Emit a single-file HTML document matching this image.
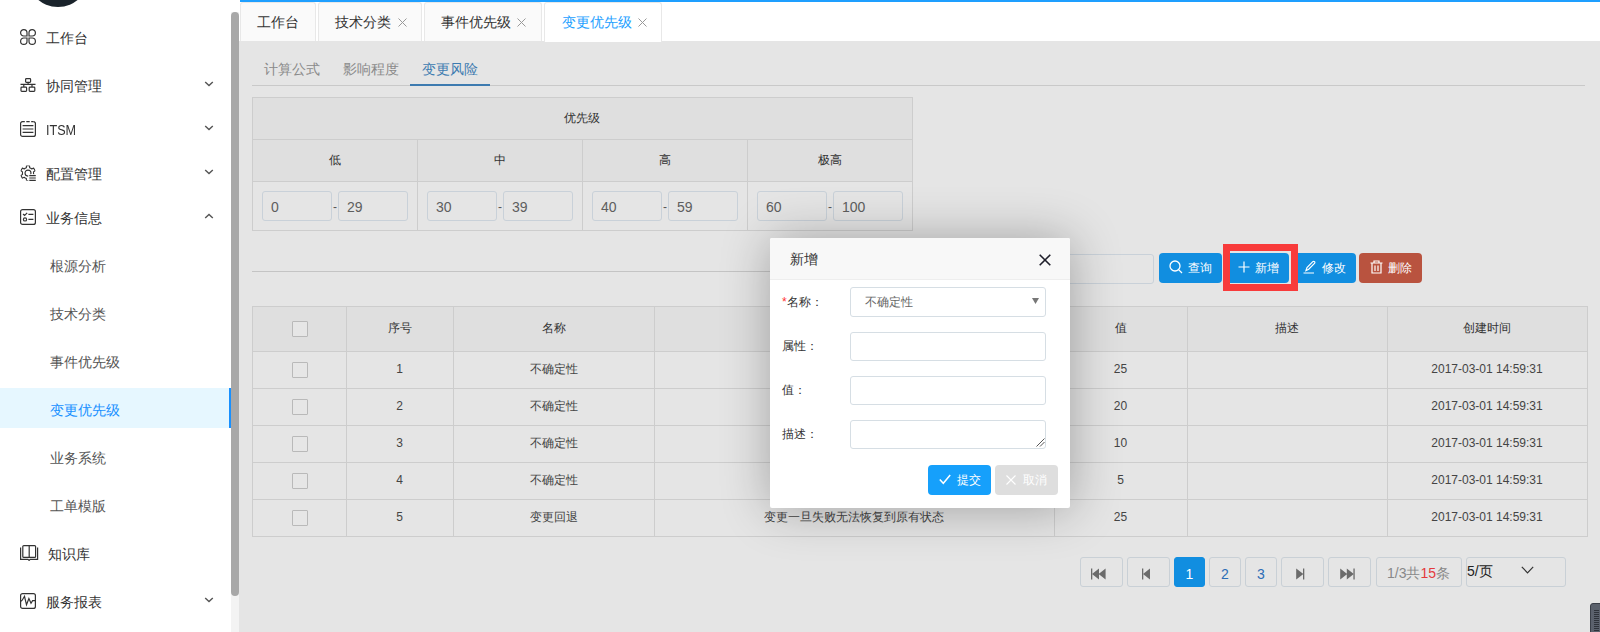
<!DOCTYPE html>
<html><head><meta charset="utf-8">
<style>
*{box-sizing:border-box;margin:0;padding:0}
html,body{width:1600px;height:632px;overflow:hidden;background:#fff;font-family:"Liberation Sans",sans-serif;color:#333}
.a{position:absolute}
.t{position:absolute;white-space:nowrap;line-height:1}
#side{left:0;top:0;width:231px;height:632px;background:#fff}
.mi{position:absolute;left:46px;font-size:14px;color:#333;white-space:nowrap;line-height:14px}
.si{position:absolute;left:50px;font-size:14px;color:#555;white-space:nowrap;line-height:14px}
.ic{position:absolute;left:20px;width:16px;height:16px}
.chev{position:absolute;left:204px;width:10px;height:6px}
#main{left:239px;top:0;width:1361px;height:632px;background:#e5e5e5}
.tab{position:absolute;top:2px;height:39px;background:#fafafa;border:1px solid #e8e8e8;border-bottom:none;border-radius:3px 3px 0 0;font-size:14px;color:#333}
.tab span{position:absolute;top:12px;line-height:14px;white-space:nowrap}
.tab i{position:absolute;top:14px;width:9px;height:9px;font-style:normal}
.cell{position:absolute;border-color:#cdcdcd;border-style:solid;border-width:0}
.inp{position:absolute;height:30px;width:70px;border:1px solid #c9d1d9;border-radius:3px;font-size:14px;color:#5e5e5e;line-height:28px;padding-left:8px;background:#e5e5e5}
.btn{position:absolute;height:30px;width:63px;border-radius:4px;color:#fff;font-size:12px}
.cb{position:absolute;width:16px;height:16px;border:1px solid #b9b9b9;border-radius:1px;background:#e6e6e6}
.pg{position:absolute;top:557px;height:30px;border:1px solid #c9d0d6;border-radius:3px}
</style></head><body>

<!-- SIDEBAR -->
<div id="side" class="a">
  <div class="a" style="left:27px;top:-55px;width:62px;height:62px;border-radius:50%;background:#1a232b"></div>
  <svg class="ic" style="top:29px" viewBox="0 0 16 16" fill="none" stroke="#333" stroke-width="1.2"><path d="M7,7H3.8A3.2,3.2 0 1 1 7,3.8Z M9,7H12.2A3.2,3.2 0 1 0 9,3.8Z M7,9H3.8A3.2,3.2 0 1 0 7,12.2Z M9,9H12.2A3.2,3.2 0 1 1 9,12.2Z"/></svg>
  <div class="mi" style="top:31px">工作台</div>
  <svg class="ic" style="top:77px" viewBox="0 0 16 16" fill="none" stroke="#333" stroke-width="1.2"><rect x="5.6" y="1.6" width="5" height="3.8" rx="0.8"/><path d="M8.1,5.4V7.3M0.5,7.3H15.5M3.8,7.3V10.1M12,7.3V10.1"/><rect x="1" y="10.1" width="5.6" height="4.3" rx="0.8"/><rect x="9.2" y="10.1" width="5.6" height="4.3" rx="0.8"/></svg>
  <div class="mi" style="top:79px">协同管理</div>
  <svg class="chev" style="top:81px" viewBox="0 0 10 6" fill="none" stroke="#555" stroke-width="1.4"><path d="M1.2,1L5,4.6L8.8,1"/></svg>
  <svg class="ic" style="top:121px" viewBox="0 0 16 16" fill="none" stroke="#333" stroke-width="1.2"><path d="M0.6,3V13.4A2,2 0 0 0 2.6,15.4H13.4A2,2 0 0 0 15.4,13.4V3A2,2 0 0 0 13.4,0.6"/><path d="M2.6,0.6H4.8M6.3,0.6H9.7M11.2,0.6H13.4M0.6,3A2,2 0 0 1 2.6,0.6" /><path d="M2.6,4.6H13.4M2.6,8H13.4M2.6,11.4H13.4"/></svg>
  <div class="mi" style="top:123px;transform:scaleX(.9);transform-origin:0 0">ITSM</div>
  <svg class="chev" style="top:125px" viewBox="0 0 10 6" fill="none" stroke="#555" stroke-width="1.4"><path d="M1.2,1L5,4.6L8.8,1"/></svg>
  <svg class="ic" style="top:165px" viewBox="0 0 16 16" fill="none" stroke="#333" stroke-width="1.1" stroke-linejoin="round"><defs><mask id="gm"><rect width="16" height="16" fill="#fff"/><rect x="8.6" y="9.6" width="8" height="8" fill="#000"/></mask></defs><g mask="url(#gm)"><path d="M5.20,3.25 L6.36,2.74 L6.44,0.76 L9.56,0.76 L9.64,2.74 L10.80,3.25 L11.82,4.00 L13.57,3.08 L15.13,5.78 L13.46,6.84 L13.60,8.10 L13.46,9.36 L15.13,10.42 L13.57,13.12 L11.82,12.20 L10.80,12.95 L9.64,13.46 L9.56,15.44 L6.44,15.44 L6.36,13.46 L5.20,12.95 L4.18,12.20 L2.43,13.12 L0.87,10.42 L2.54,9.36 L2.40,8.10 L2.54,6.84 L0.87,5.78 L2.43,3.08 L4.18,4.00Z"/><circle cx="8" cy="8.1" r="3"/></g><path d="M9.3,10.7H15.8M9.3,13H15.8M9.3,15.3H15.8" stroke-width="1.2"/></svg>
  <div class="mi" style="top:167px">配置管理</div>
  <svg class="chev" style="top:169px" viewBox="0 0 10 6" fill="none" stroke="#555" stroke-width="1.4"><path d="M1.2,1L5,4.6L8.8,1"/></svg>
  <svg class="ic" style="top:209px" viewBox="0 0 16 16" fill="none" stroke="#333" stroke-width="1.2"><rect x="0.6" y="0.6" width="14.8" height="14.8" rx="2"/><path d="M3,5L4.6,6.4L7.2,3.8M8.4,5.3H13.4M8.4,10.3H13.4"/><circle cx="5" cy="10.4" r="1.6"/></svg>
  <div class="mi" style="top:211px">业务信息</div>
  <svg class="chev" style="top:213px" viewBox="0 0 10 6" fill="none" stroke="#555" stroke-width="1.4"><path d="M1.2,5L5,1.4L8.8,5"/></svg>
  <div class="si" style="top:259px">根源分析</div>
  <div class="si" style="top:307px">技术分类</div>
  <div class="si" style="top:355px">事件优先级</div>
  <div class="a" style="left:0;top:388px;width:231px;height:40px;background:#e6f7ff;border-right:2px solid #1890ff"></div>
  <div class="si" style="top:403px;color:#1890ff">变更优先级</div>
  <div class="si" style="top:451px">业务系统</div>
  <div class="si" style="top:499px">工单模版</div>
  <svg class="a" style="left:20px;top:545px;width:19px;height:16px" viewBox="0 0 19 16" fill="none" stroke="#333" stroke-width="1.2"><path d="M0.6,2.6V14.4H8L9.1,15.4L10.2,14.4H17.6V2.6"/><rect x="2.8" y="0.6" width="12.8" height="11.8" rx="1"/><path d="M9.2,0.6V12.4"/></svg>
  <div class="mi" style="top:547px;left:48px">知识库</div>
  <svg class="ic" style="top:593px" viewBox="0 0 16 16" fill="none" stroke="#333" stroke-width="1.2"><rect x="0.6" y="0.6" width="14.8" height="14.8" rx="2"/><path d="M0.8,8.2L2.2,7.2L4.5,3.3L6.5,11.8L8.9,5.5L11,10.3L12.6,7.6H15.2"/></svg>
  <div class="mi" style="top:595px">服务报表</div>
  <svg class="chev" style="top:597px" viewBox="0 0 10 6" fill="none" stroke="#555" stroke-width="1.4"><path d="M1.2,1L5,4.6L8.8,1"/></svg>
</div>
<div class="a" style="left:231px;top:0;width:8px;height:632px;background:#f3f3f3"></div><div class="a" style="left:231px;top:0;width:9px;height:12px;background:#fff"></div>
<div class="a" style="left:231px;top:12px;width:8px;height:584px;background:#a8a8a8;border-radius:4px"></div>

<!-- MAIN -->
<div class="a" style="left:239px;top:0;width:1361px;height:632px;background:#e5e5e5"></div>
<div class="a" style="left:239px;top:0;width:1361px;height:41px;background:#fff"></div>
<div class="a" style="left:240px;top:0;width:1360px;height:2px;background:#1e9fff"></div>

<div class="tab" style="left:240px;width:76px"><span style="left:16px">工作台</span></div>
<div class="tab" style="left:318px;width:104px"><span style="left:16px">技术分类</span><svg class="a" style="left:79px;top:15px" width="9" height="9" viewBox="0 0 9 9" stroke="#999" stroke-width="1"><path d="M0.5,0.5L8.5,8.5M8.5,0.5L0.5,8.5"/></svg></div>
<div class="tab" style="left:424px;width:118px"><span style="left:16px">事件优先级</span><svg class="a" style="left:92px;top:15px" width="9" height="9" viewBox="0 0 9 9" stroke="#999" stroke-width="1"><path d="M0.5,0.5L8.5,8.5M8.5,0.5L0.5,8.5"/></svg></div>
<div class="tab" style="left:544px;width:118px;height:40px;background:#fff;color:#1e9fff"><span style="left:17px">变更优先级</span><svg class="a" style="left:93px;top:15px" width="9" height="9" viewBox="0 0 9 9" stroke="#999" stroke-width="1"><path d="M0.5,0.5L8.5,8.5M8.5,0.5L0.5,8.5"/></svg></div>

<div class="t" style="left:264px;top:62px;font-size:14px;color:#8a8a8a">计算公式</div>
<div class="t" style="left:343px;top:62px;font-size:14px;color:#8a8a8a">影响程度</div>
<div class="t" style="left:422px;top:62px;font-size:14px;color:#3d7bb0">变更风险</div>
<div class="a" style="left:252px;top:85px;width:1333px;height:1px;background:#c9c9c9"></div>
<div class="a" style="left:410px;top:84px;width:80px;height:2px;background:#3d7bb0"></div>

<!-- priority table -->
<div class="a" style="left:252px;top:97px;width:661px;height:134px;border:1px solid #cdcdcd;background:#e5e5e5"></div>
<div class="a" style="left:253px;top:98px;width:659px;height:83px;background:#dfdfdf"></div>
<div class="a" style="left:252px;top:139px;width:661px;height:1px;background:#cdcdcd"></div>
<div class="a" style="left:252px;top:181px;width:661px;height:1px;background:#cdcdcd"></div>
<div class="a" style="left:417px;top:139px;width:1px;height:92px;background:#cdcdcd"></div>
<div class="a" style="left:582px;top:139px;width:1px;height:92px;background:#cdcdcd"></div>
<div class="a" style="left:747px;top:139px;width:1px;height:92px;background:#cdcdcd"></div>
<div class="t" style="left:564px;top:112px;font-size:12px">优先级</div>
<div class="t" style="left:329px;top:154px;font-size:12px">低</div>
<div class="t" style="left:494px;top:154px;font-size:12px">中</div>
<div class="t" style="left:659px;top:154px;font-size:12px">高</div>
<div class="t" style="left:818px;top:154px;font-size:12px">极高</div>
<div class="inp" style="left:262px;top:191px;padding-top:1px">0</div><div class="t" style="left:333px;top:201px;font-size:12px;color:#555">-</div><div class="inp" style="left:338px;top:191px;padding-top:1px">29</div>
<div class="inp" style="left:427px;top:191px;padding-top:1px">30</div><div class="t" style="left:498px;top:201px;font-size:12px;color:#555">-</div><div class="inp" style="left:503px;top:191px;padding-top:1px">39</div>
<div class="inp" style="left:592px;top:191px;padding-top:1px">40</div><div class="t" style="left:663px;top:201px;font-size:12px;color:#555">-</div><div class="inp" style="left:668px;top:191px;padding-top:1px">59</div>
<div class="inp" style="left:757px;top:191px;padding-top:1px">60</div><div class="t" style="left:828px;top:201px;font-size:12px;color:#555">-</div><div class="inp" style="left:833px;top:191px;padding-top:1px">100</div>


<div class="a" style="left:252px;top:271px;width:760px;height:1px;background:#c4c4c4"></div>
<div class="a" style="left:960px;top:254px;width:194px;height:30px;border:1px solid #c9d1d9;border-radius:3px"></div>

<div class="btn" style="left:1159px;top:253px;background:#118ee0"><svg class="a" style="left:10px;top:7px" width="14" height="14" viewBox="0 0 14 14" fill="none" stroke="#fff" stroke-width="1.3"><circle cx="6" cy="6" r="5"/><path d="M9.6,9.6L13,13"/></svg><span class="t" style="left:29px;top:9px">查询</span></div>
<div class="btn" style="left:1226px;top:253px;background:#118ee0"><svg class="a" style="left:12px;top:8px" width="12" height="12" viewBox="0 0 12 12" fill="none" stroke="#fff" stroke-width="1.2"><path d="M6,0.5V11.5M0.5,6H11.5"/></svg><span class="t" style="left:29px;top:9px">新增</span></div>
<div class="btn" style="left:1293px;top:253px;background:#118ee0"><svg class="a" style="left:10px;top:7px" width="13" height="14" viewBox="0 0 13 14" fill="none" stroke="#fff" stroke-width="1.2"><path d="M3,10.5L4,7.5L9.8,1.7A1.2,1.2 0 0 1 11.5,3.4L5.7,9.2Z M0.5,13H11"/></svg><span class="t" style="left:29px;top:9px">修改</span></div>
<div class="btn" style="left:1359px;top:253px;background:#b9533f"><svg class="a" style="left:11px;top:7px" width="13" height="14" viewBox="0 0 13 14" fill="none" stroke="#fff" stroke-width="1.2"><path d="M0.5,3H12.5M4,3V1H9V3M2,3V13H11V3M5,5.5V11M8,5.5V11"/></svg><span class="t" style="left:29px;top:9px">删除</span></div>
<div class="a" style="left:1223px;top:244px;width:75px;height:47px;border:7px solid #f83b3b"></div>

<!-- data table -->
<div class="a" style="left:252px;top:306px;width:1336px;height:231px;border:1px solid #cdcdcd;background:#e5e5e5"></div>
<div class="a" style="left:253px;top:307px;width:1334px;height:44px;background:#dfdfdf"></div>
<div class="a" style="left:252px;top:351px;width:1336px;height:1px;background:#cdcdcd"></div><div class="a" style="left:252px;top:388px;width:1336px;height:1px;background:#cdcdcd"></div><div class="a" style="left:252px;top:425px;width:1336px;height:1px;background:#cdcdcd"></div><div class="a" style="left:252px;top:462px;width:1336px;height:1px;background:#cdcdcd"></div><div class="a" style="left:252px;top:499px;width:1336px;height:1px;background:#cdcdcd"></div>
<div class="a" style="left:346px;top:306px;width:1px;height:231px;background:#cdcdcd"></div><div class="a" style="left:453px;top:306px;width:1px;height:231px;background:#cdcdcd"></div><div class="a" style="left:654px;top:306px;width:1px;height:231px;background:#cdcdcd"></div><div class="a" style="left:1054px;top:306px;width:1px;height:231px;background:#cdcdcd"></div><div class="a" style="left:1187px;top:306px;width:1px;height:231px;background:#cdcdcd"></div><div class="a" style="left:1387px;top:306px;width:1px;height:231px;background:#cdcdcd"></div>
<div class="t" style="left:99.5px;width:600px;text-align:center;top:322px;font-size:12px;color:#333;">序号</div><div class="t" style="left:253.5px;width:600px;text-align:center;top:322px;font-size:12px;color:#333;">名称</div><div class="t" style="left:554.0px;width:600px;text-align:center;top:322px;font-size:12px;color:#333;">属性</div><div class="t" style="left:820.5px;width:600px;text-align:center;top:322px;font-size:12px;color:#333;">值</div><div class="t" style="left:987.0px;width:600px;text-align:center;top:322px;font-size:12px;color:#333;">描述</div><div class="t" style="left:1187.0px;width:600px;text-align:center;top:322px;font-size:12px;color:#333;">创建时间</div>
<div class="a cb" style="left:292px;top:321px"></div>
<div class="a cb" style="left:292px;top:362px"></div><div class="t" style="left:99.5px;width:600px;text-align:center;top:363px;font-size:12px;color:#444;">1</div><div class="t" style="left:253.5px;width:600px;text-align:center;top:363px;font-size:12px;color:#444;">不确定性</div><div class="t" style="left:820.5px;width:600px;text-align:center;top:363px;font-size:12px;color:#444;">25</div><div class="t" style="left:1187.0px;width:600px;text-align:center;top:363px;font-size:12px;color:#444;">2017-03-01 14:59:31</div>
<div class="a cb" style="left:292px;top:399px"></div><div class="t" style="left:99.5px;width:600px;text-align:center;top:400px;font-size:12px;color:#444;">2</div><div class="t" style="left:253.5px;width:600px;text-align:center;top:400px;font-size:12px;color:#444;">不确定性</div><div class="t" style="left:820.5px;width:600px;text-align:center;top:400px;font-size:12px;color:#444;">20</div><div class="t" style="left:1187.0px;width:600px;text-align:center;top:400px;font-size:12px;color:#444;">2017-03-01 14:59:31</div>
<div class="a cb" style="left:292px;top:436px"></div><div class="t" style="left:99.5px;width:600px;text-align:center;top:437px;font-size:12px;color:#444;">3</div><div class="t" style="left:253.5px;width:600px;text-align:center;top:437px;font-size:12px;color:#444;">不确定性</div><div class="t" style="left:820.5px;width:600px;text-align:center;top:437px;font-size:12px;color:#444;">10</div><div class="t" style="left:1187.0px;width:600px;text-align:center;top:437px;font-size:12px;color:#444;">2017-03-01 14:59:31</div>
<div class="a cb" style="left:292px;top:473px"></div><div class="t" style="left:99.5px;width:600px;text-align:center;top:474px;font-size:12px;color:#444;">4</div><div class="t" style="left:253.5px;width:600px;text-align:center;top:474px;font-size:12px;color:#444;">不确定性</div><div class="t" style="left:820.5px;width:600px;text-align:center;top:474px;font-size:12px;color:#444;">5</div><div class="t" style="left:1187.0px;width:600px;text-align:center;top:474px;font-size:12px;color:#444;">2017-03-01 14:59:31</div>
<div class="a cb" style="left:292px;top:510px"></div><div class="t" style="left:99.5px;width:600px;text-align:center;top:511px;font-size:12px;color:#444;">5</div><div class="t" style="left:253.5px;width:600px;text-align:center;top:511px;font-size:12px;color:#444;">变更回退</div><div class="t" style="left:554.0px;width:600px;text-align:center;top:511px;font-size:12px;color:#444;">变更一旦失败无法恢复到原有状态</div><div class="t" style="left:820.5px;width:600px;text-align:center;top:511px;font-size:12px;color:#444;">25</div><div class="t" style="left:1187.0px;width:600px;text-align:center;top:511px;font-size:12px;color:#444;">2017-03-01 14:59:31</div>


<!-- pagination -->
<div class="pg" style="left:1080px;width:43px"><svg class="a" style="left:10px;top:10px" width="15" height="12" viewBox="0 0 15 12" fill="#6b6b6b"><rect x="0" y="0.5" width="1.3" height="11"/><path d="M1,6L8,0.5V11.5Z M7.6,6L14.6,0.5V11.5Z"/></svg></div>
<div class="pg" style="left:1127px;width:43px"><svg class="a" style="left:14px;top:10px" width="9" height="12" viewBox="0 0 9 12" fill="#6b6b6b"><rect x="0" y="0.5" width="1.3" height="11"/><path d="M1,6L8,0.5V11.5Z"/></svg></div>
<div class="pg" style="left:1174px;width:31px;background:#118ee0;border-color:#118ee0;color:#fff"><span class="t" style="left:0;width:100%;text-align:center;top:9px;font-size:14px">1</span></div>
<div class="pg" style="left:1209px;width:32px;color:#2d6db5"><span class="t" style="left:0;width:100%;text-align:center;top:9px;font-size:14px">2</span></div>
<div class="pg" style="left:1245px;width:32px;color:#2d6db5"><span class="t" style="left:0;width:100%;text-align:center;top:9px;font-size:14px">3</span></div>
<div class="pg" style="left:1281px;width:43px"><svg class="a" style="left:14px;top:10px" width="9" height="12" viewBox="0 0 9 12" fill="#6b6b6b"><path d="M0.2,0.5L7.4,6L0.2,11.5Z"/><rect x="7" y="0.5" width="1.3" height="11"/></svg></div>
<div class="pg" style="left:1328px;width:43px"><svg class="a" style="left:11px;top:10px" width="15" height="12" viewBox="0 0 15 12" fill="#6b6b6b"><path d="M0.2,0.5L7.2,6L0.2,11.5Z M6.8,0.5L13.8,6L6.8,11.5Z"/><rect x="13.4" y="0.5" width="1.3" height="11"/></svg></div>
<div class="pg" style="left:1376px;width:86px;color:#888"><span class="t" style="left:10px;top:8px;font-size:14px">1/3共<span style="color:#e4393c">15</span>条</span></div>
<div class="pg" style="left:1466px;width:100px;color:#222"><span class="t" style="left:0px;top:6px;font-size:14px">5/页</span><svg class="a" style="left:54px;top:8px" width="13" height="8" viewBox="0 0 13 8" fill="none" stroke="#333" stroke-width="1.2"><path d="M0.8,0.8L6.5,6.8L12.2,0.8"/></svg></div>

<div class="a" style="left:1590px;top:603px;width:14px;height:32px;background:#5b616c;border:1px solid #3a3f48;border-radius:3px"><div class="a" style="left:3px;top:6px;width:5px;height:24px;background:repeating-linear-gradient(#2f333a 0 1px,transparent 1px 2px)"></div></div>

<div id="modal" class="a" style="left:770px;top:238px;width:300px;height:270px;background:#fff;border-radius:2px;box-shadow:1px 1px 50px rgba(0,0,0,.3)">
  <div class="a" style="left:0;top:0;width:300px;height:42px;background:#f8f8f8;border-bottom:1px solid #eee;border-radius:2px 2px 0 0"></div>
  <div class="t" style="left:20px;top:14px;font-size:14px;color:#333">新增</div>
  <svg class="a" style="left:269px;top:16px" width="12" height="12" viewBox="0 0 12 12" fill="none" stroke="#1e1e2a" stroke-width="1.6"><path d="M0.7,0.7L11.3,11.3M11.3,0.7L0.7,11.3"/></svg>
  <div class="t" style="left:12px;top:58px;font-size:12px;color:#333"><span style="color:#f33">*</span>名称：</div>
  <div class="a" style="left:80px;top:49px;width:196px;height:30px;border:1px solid #d6dee4;border-radius:3px"></div>
  <div class="t" style="left:95px;top:58px;font-size:12px;color:#666">不确定性</div>
  <svg class="a" style="left:262px;top:60px" width="7" height="6" viewBox="0 0 7 6" fill="#777"><path d="M0,0H7L3.5,6Z"/></svg>
  <div class="t" style="left:12px;top:102px;font-size:12px;color:#333">属性：</div>
  <div class="a" style="left:80px;top:94px;width:196px;height:29px;border:1px solid #d6dee4;border-radius:3px"></div>
  <div class="t" style="left:12px;top:146px;font-size:12px;color:#333">值：</div>
  <div class="a" style="left:80px;top:138px;width:196px;height:29px;border:1px solid #d6dee4;border-radius:3px"></div>
  <div class="t" style="left:12px;top:190px;font-size:12px;color:#333">描述：</div>
  <div class="a" style="left:80px;top:182px;width:196px;height:29px;border:1px solid #d6dee4;border-radius:3px"></div>
  <svg class="a" style="left:266px;top:200px" width="9" height="9" viewBox="0 0 9 9" fill="none" stroke="#444" stroke-width="0.9"><path d="M0.5,8.5L8.5,0.5M4,8.5L8.5,4"/></svg>
  <div class="btn" style="left:158px;top:227px;width:63px;background:#16a0fb"><svg class="a" style="left:11px;top:9px" width="12" height="11" viewBox="0 0 12 11" fill="none" stroke="#fff" stroke-width="1.5"><path d="M0.8,5.5L4.3,9.3L11.2,1"/></svg><span class="t" style="left:29px;top:9px">提交</span></div>
  <div class="btn" style="left:225px;top:227px;width:63px;background:#dedede"><svg class="a" style="left:11px;top:10px" width="10" height="10" viewBox="0 0 10 10" fill="none" stroke="#fff" stroke-width="1.1"><path d="M0.5,0.5L9.5,9.5M9.5,0.5L0.5,9.5"/></svg><span class="t" style="left:28px;top:9px">取消</span></div>
</div>
</body></html>
